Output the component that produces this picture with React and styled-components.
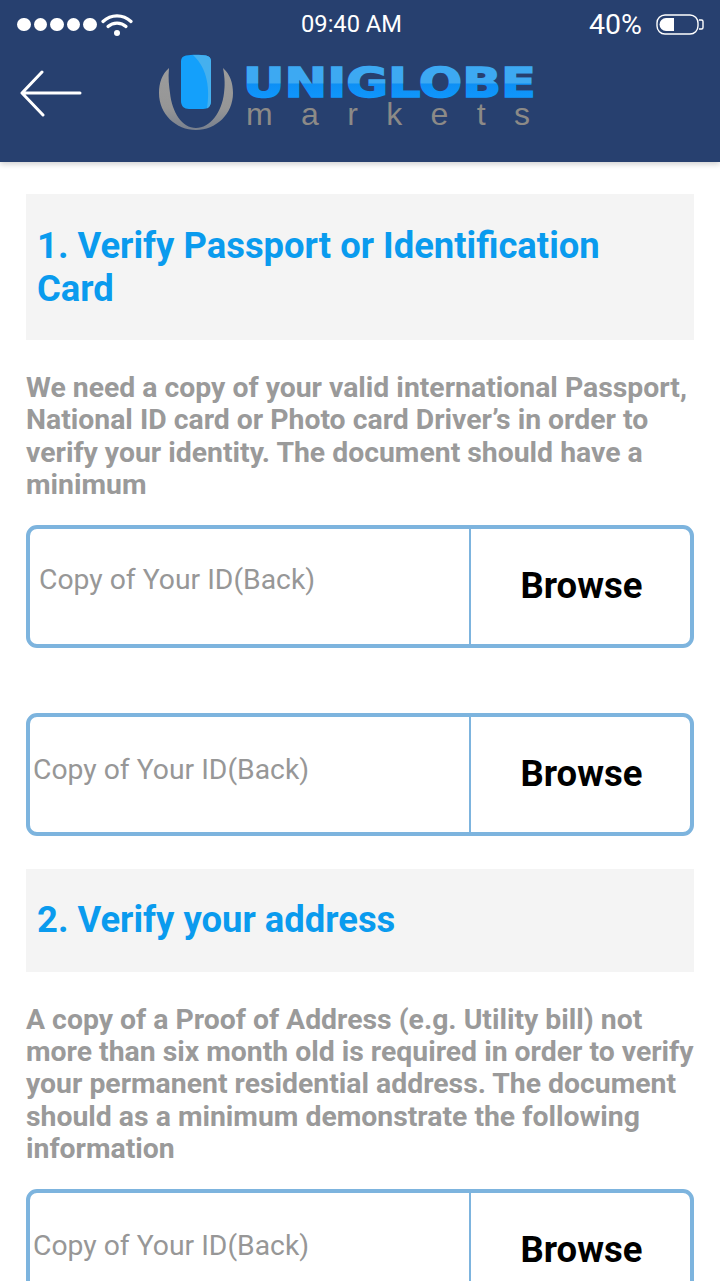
import styled, { createGlobalStyle } from 'styled-components';

const GlobalStyle = createGlobalStyle`
	html,
	body {
		margin: 0;
		padding: 0;
		background: #fff;
	}
`;

const Page = styled.div`
	width: 720px;
	height: 1281px;
	overflow: hidden;
	background: #fff;
	font-family: Roboto, 'Liberation Sans', sans-serif;
`;

const Header = styled.header`
	height: 162px;
	background: #27406f;
	box-shadow: 0 2px 6px rgba(0, 0, 0, 0.2);
	color: #fff;
`;

const StatusBar = styled.div`
	height: 49px;
	padding: 0 16px 0 17px;
	display: grid;
	grid-template-columns: 284px auto 1fr;
	align-items: center;
`;

const StatusLeft = styled.div`
	display: flex;
	align-items: center;
	gap: 3px;
`;

const Dot = styled.span`
	width: 13.5px;
	height: 13.5px;
	border-radius: 50%;
	background: #fff;
`;

const Time = styled.div`
	font-size: 23.7px;
	line-height: 49px;
`;

const StatusRight = styled.div`
	display: flex;
	justify-content: flex-end;
	align-items: center;
	gap: 14px;
	font-size: 28.5px;
`;

const NavRow = styled.div`
	display: flex;
	align-items: flex-start;
	padding-left: 20px;
`;

const BackIcon = styled.svg`
	width: 62px;
	height: 48px;
	margin-top: 21px;
`;

const Logo = styled.svg`
	width: 382px;
	height: 82px;
	margin-left: 76px;
	margin-top: 3px;
`;

const Content = styled.main`
	padding: 32px 26px 0;
`;

const Section = styled.div`
	background: #f4f4f4;
	padding: 29.5px 11px 30.5px;
	margin-bottom: 32px;
`;

const Title = styled.h2`
	margin: 0;
	font-size: 36.4px;
	line-height: 43px;
	font-weight: 700;
	color: #0a9bee;
`;

const Text = styled.p`
	margin: 0 0 23px;
	font-size: 28.37px;
	line-height: 32.4px;
	font-weight: 700;
	color: #9a9a9a;
`;

const Upload = styled.div`
	height: 123px;
	box-sizing: border-box;
	border: 4px solid #7db4de;
	border-radius: 11px;
	margin-bottom: ${(p) => p.$gap}px;
	display: grid;
	grid-template-columns: 441px 1fr;
`;

const FileName = styled.div`
	padding: ${(p) => p.$top}px 0 0 ${(p) => p.$left}px;
	font-size: 28.3px;
	line-height: 36px;
	color: #979797;
	border-right: 2px solid #7db4de;
`;

const Browse = styled.button`
	border: 0;
	background: transparent;
	padding: 0 0 2px 2px;
	font-family: inherit;
	font-size: 36.5px;
	font-weight: 700;
	color: #000;
`;

const Back = () => (
	<BackIcon viewBox='0 0 62 48' fill='none' stroke='#fff' strokeWidth='3' strokeLinecap='round' strokeLinejoin='round'>
		<path d='M60 23H3M22 2 2 23l21 22' />
	</BackIcon>
);

const Wifi = () => (
	<svg width='32' height='24' viewBox='0 0 32 24' fill='none' stroke='#fff' strokeWidth='3.2' strokeLinecap='round' style={{ marginLeft: 1 }}>
		<path d='M2 8.500C10 1 22 1 30 8.500' />
		<path d='M7 13.500C12 9 20 9 25 13.500' />
		<circle cx='16' cy='20' r='3' fill='#fff' stroke='none' />
	</svg>
);

const Battery = () => (
	<svg width='48' height='22' viewBox='0 0 48 22' fill='none'>
		<rect x='1' y='1' width='41' height='19' rx='8' stroke='#fff' strokeWidth='1.4' />
		<path d='M10 4h8v13h-8a6.500 6.500 0 0 1 0-13Z' fill='#fff' />
		<path d='M43 6h2.500a1.500 1.500 0 0 1 1.500 1.500v6a1.500 1.500 0 0 1-1.500 1.500H43' stroke='#fff' strokeWidth='1.4' />
	</svg>
);

const UniLogo = () => (
	<Logo viewBox='0 0 382 82'>
		<defs>
			<linearGradient id='word' x1='0' y1='0' x2='0' y2='1'>
				<stop offset='0' stopColor='#3da9f2' />
				<stop offset='0.5' stopColor='#3da9f2' />
				<stop offset='0.52' stopColor='#0d8ff5' />
				<stop offset='1' stopColor='#129bff' />
			</linearGradient>
			<linearGradient id='ring' x1='0' y1='0' x2='0' y2='1'>
				<stop offset='0' stopColor='#9c9c9c' />
				<stop offset='0.65' stopColor='#969696' />
				<stop offset='1' stopColor='#78808e' />
			</linearGradient>
		</defs>
		<path d='M11 16C4 22 1 31 1 41C1 62 18 78 38 78C58 78 75 62 75 41C75 31 72 22 65 16C67 26 67 34 66 41C64 60 52 76 38 76C24 76 14 60 12 41C11 34 10 26 11 16Z' fill='url(#ring)' />
		<path d='M23 9c0-3 2-5 5-5.500 6-1 14-1 20 0 3 .500 5 2.500 5 5.500v40c0 5-3 8-8 8H31c-5 0-8-3-8-8Z' fill='#14a0fb' />
		<path d='M35 3c6 0 10 0 13 .500 3 .500 5 2.500 5 5.500v40c0 4-2 6.500-4 7.500 3-18 1-40-14-53.500Z' fill='#45b0ee' />
		<text x='85' y='45' fontFamily='DejaVu Sans' fontWeight='700' fontSize='41' fill='url(#word)' stroke='url(#word)' strokeWidth='1.5' textLength='293' lengthAdjust='spacingAndGlyphs'>UNIGLOBE</text>
		<text x='88' y='73' fontFamily='Liberation Sans' fontSize='32' fill='#8c8a87' textLength='284' lengthAdjust='spacing'>markets</text>
	</Logo>
);

const App = () => {
	return (
		<Page>
			<GlobalStyle />
			<Header>
				<StatusBar>
					<StatusLeft>
						<Dot />
						<Dot />
						<Dot />
						<Dot />
						<Dot />
						<Wifi />
					</StatusLeft>
					<Time>09:40 AM</Time>
					<StatusRight>
						40%
						<Battery />
					</StatusRight>
				</StatusBar>
				<NavRow>
					<Back />
					<UniLogo />
				</NavRow>
			</Header>
			<Content>
				<Section>
					<Title>1. Verify Passport or Identification Card</Title>
				</Section>
				<Text>
					We need a copy of your valid international Passport, National ID card or Photo card Driver’s in order to verify your identity. The document should have a minimum
				</Text>
				<Upload $gap={65}>
					<FileName $top={33} $left={9}>Copy of Your ID(Back)</FileName>
					<Browse>Browse</Browse>
				</Upload>
				<Upload $gap={33}>
					<FileName $top={35} $left={3}>Copy of Your ID(Back)</FileName>
					<Browse>Browse</Browse>
				</Upload>
				<Section>
					<Title>2. Verify your address</Title>
				</Section>
				<Text>
					A copy of a Proof of Address (e.g. Utility bill) not more than six month old is required in order to verify your permanent residential address. The document should as a minimum demonstrate the following information
				</Text>
				<Upload $gap={0}>
					<FileName $top={35} $left={3}>Copy of Your ID(Back)</FileName>
					<Browse>Browse</Browse>
				</Upload>
			</Content>
		</Page>
	);
};

export default App;
